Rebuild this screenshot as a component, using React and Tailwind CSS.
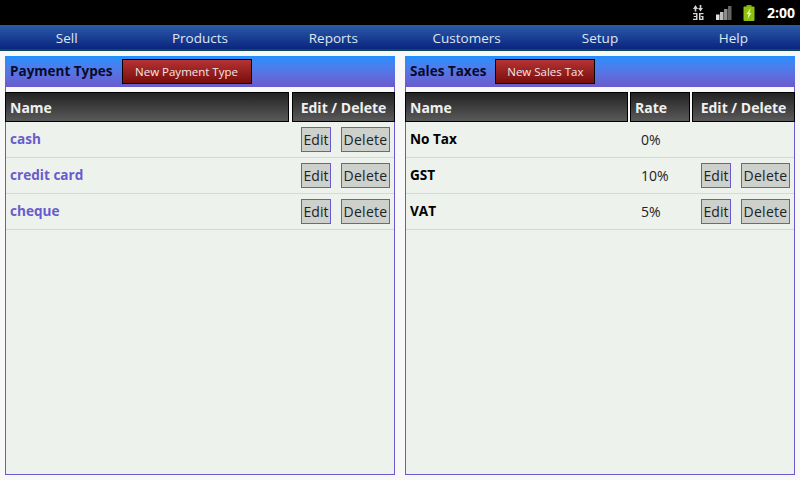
const navItems = ["Sell", "Products", "Reports", "Customers", "Setup", "Help"];

const headCell = "flex h-[30px] items-center border border-black bg-gradient-to-b from-[#242424] to-[#5a5a5a] px-[4px] text-[14px] font-bold text-[#f0f0f0]";

function RowButtons() {
  return (
    <div className="flex items-center gap-[10px]">
      <button type="button" className="h-[25px] w-[30px] border border-[#6a5acd] bg-[#cdd0cb] text-center text-[14px] text-[#222]">
        Edit
      </button>
      <button type="button" className="h-[25px] w-[49px] border border-[#6a5acd] bg-[#cdd0cb] text-center text-[14px] tracking-[0.3px] text-[#222]">
        Delete
      </button>
    </div>
  );
}

function PanelHeader({ title, action, actionWidth }) {
  return (
    <div className="flex h-[31px] items-center gap-[9px] bg-gradient-to-b from-[#1e90ff] to-[#6a5acd] px-[5px]">
      <span className="text-[13.5px] font-bold text-[#0a0a2a]">{title}</span>
      <button type="button" className={`h-[25px] border border-black bg-gradient-to-b from-[#b53333] to-[#7a0c0c] text-[11.5px] text-[#f4e6e6] ${actionWidth}`}>
        {action}
      </button>
    </div>
  );
}

function PaymentTypes() {
  const rows = ["cash", "credit card", "cheque"];
  return (
    <section className="flex h-[419px] w-[390px] flex-col">
      <PanelHeader title="Payment Types" action="New Payment Type" actionWidth="w-[130px]" />
      <div className="h-[5px] border-x border-[#6a5acd]" />
      <div className="flex gap-[3px]">
        <div className={`${headCell} flex-1`}>Name</div>
        <div className={`${headCell} w-[103px] justify-center`}>Edit / Delete</div>
      </div>
      <div className="flex-1 border-x border-b border-[#6a5acd] bg-[#edf2ec]">
        {rows.map((row) => (
          <div key={row} className="flex h-[36px] items-center justify-between border-b border-[#d5dad3] pl-[4px] pr-[4px]">
            <span className="text-[13.6px] font-bold text-[#6a5acd]">{row}</span>
            <RowButtons />
          </div>
        ))}
      </div>
    </section>
  );
}

function SalesTaxes() {
  const rows = [
    { name: "No Tax", rate: "0%", editable: false },
    { name: "GST", rate: "10%", editable: true },
    { name: "VAT", rate: "5%", editable: true },
  ];
  return (
    <section className="flex h-[419px] w-[390px] flex-col">
      <PanelHeader title="Sales Taxes" action="New Sales Tax" actionWidth="w-[100px]" />
      <div className="h-[5px] border-x border-[#6a5acd]" />
      <div className="flex gap-[2px]">
        <div className={`${headCell} flex-1`}>Name</div>
        <div className={`${headCell} w-[60px]`}>Rate</div>
        <div className={`${headCell} w-[103px] justify-center`}>Edit / Delete</div>
      </div>
      <div className="flex-1 border-x border-b border-[#6a5acd] bg-[#edf2ec]">
        {rows.map((row) => (
          <div key={row.name} className="flex h-[36px] items-center border-b border-[#d5dad3] pl-[4px] pr-[4px]">
            <span className="w-[231px] text-[13.6px] font-bold text-black">{row.name}</span>
            <span className="flex-1 text-[14px] text-[#222]">{row.rate}</span>
            {row.editable && <RowButtons />}
          </div>
        ))}
      </div>
    </section>
  );
}

export default function App() {
  return (
    <div className="flex h-[480px] w-[800px] flex-col overflow-hidden bg-[#f8f8f8] font-['Open_Sans','Noto_Sans',sans-serif]">
      <div className="flex h-[25px] items-center justify-end bg-black pr-[5px]">
        <svg width="12" height="15" viewBox="0 0 12 15" className="mr-[11px]" fill="#d4d4d4">
          <path d="M0 4 2.5 0 5 4H3.3v2.5H1.7V4zM6.7 0h1.6v3H10L7.5 6.5 5 3h1.7z" />
          <path d="M0 8h4.5v7H0v-1.2h3v-1.9H.8v-1h2.2V9.2H0zM6 8h4.5v1.2H7.5v4.6H9v-1.9H8v-1h2.5V15H6z" />
        </svg>
        <svg width="16" height="14" viewBox="0 0 16 14" className="mr-[11px] mt-[1px]">
          <rect x="0" y="8.5" width="3.5" height="5.5" fill="#e0e0e0" />
          <rect x="4" y="6" width="3.5" height="8" fill="#c0c0c0" />
          <rect x="8" y="3" width="3.5" height="11" fill="#8c8c8c" />
          <rect x="12" y="0" width="3.5" height="14" fill="#646464" />
        </svg>
        <svg width="12" height="16" viewBox="0 0 12 16" className="mr-[12px]">
          <rect x="3.5" y="0" width="5" height="2" fill="#7da60a" />
          <rect x="0.5" y="1.5" width="11" height="14.5" rx="1" fill="#8cc20c" />
          <path d="M7.5 3 3.5 9h2L4.5 14l4-6h-2z" fill="#e6f5b0" />
        </svg>
        <span className="text-[14px] font-bold text-white">2:00</span>
      </div>
      <nav className="grid h-[26px] grid-cols-6 border-b-2 border-[#0c4a5c] bg-gradient-to-b from-[#2c5aa8] to-[#0c2480]">
        {navItems.map((item) => (
          <span key={item} className="text-center text-[13.5px] leading-[26px] text-[#dfe6f4]">
            {item}
          </span>
        ))}
      </nav>
      <main className="flex justify-between px-[5px] pt-[5px]">
        <PaymentTypes />
        <SalesTaxes />
      </main>
    </div>
  );
}
